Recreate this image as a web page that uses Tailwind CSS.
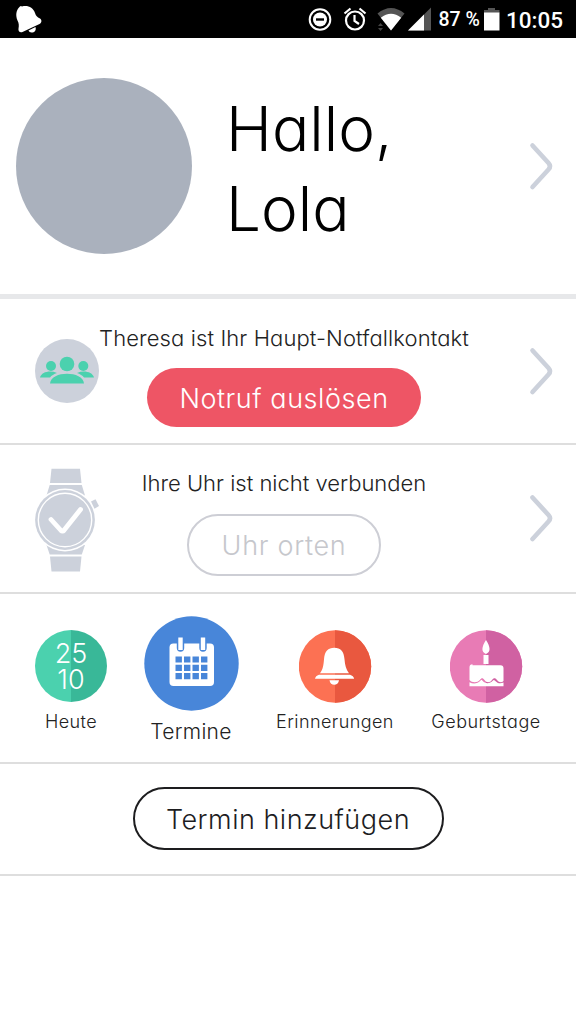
<!DOCTYPE html>
<html lang="de">
<head>
<meta charset="utf-8">
<title>Hallo, Lola</title>
<script src="https://cdn.jsdelivr.net/npm/@tailwindcss/browser@4"></script>
</head>
<body class="bg-white">
<div class="flex h-[1024px] w-[576px] flex-col overflow-hidden bg-white font-['Inter','Open_Sans',sans-serif] font-light text-[#222] [font-feature-settings:'cv11']">

  <!-- Status bar -->
  <header class="h-[38px] shrink-0 bg-black">
    <div class="flex h-full justify-between">
      <svg class="ml-3 h-[38px] w-8" viewBox="12 0 32 38" fill="#fff">
        <path d="M19 7.500q1.500-2.500 3-1c6-1.500 11 1 13 6.500 1 3 2 4 5 5.500 2 1.500 2 4-.500 5.500L22.500 32c-2.500 1-4.500-.500-4-3.500.500-3 .500-5-1-8-2-5-1.500-9.500 1.500-13Z"/>
        <path d="M28.500 30.500l7-3.500c1 3.500-1 5.500-4 5.500-1.500 0-2.500-.700-3-2Z"/>
      </svg>
      <div class="flex">
        <svg class="h-[38px] w-[134px]" viewBox="304 0 134 38">
          <circle cx="319" cy="19.500" r="10.300" fill="none" stroke="#fff" stroke-width="2"/>
          <circle cx="319" cy="19.500" r="7" fill="#fff"/>
          <path d="M315 19.500h8" stroke="#000" stroke-width="2.400"/>
          <g fill="none" stroke="#fff" stroke-width="2.200">
            <circle cx="354" cy="20.500" r="9"/>
            <path d="M353.500 15v6l4.500 3M343.500 13.500l6-5M358.500 8.500l6 5"/>
          </g>
          <path d="M376.500 13.500q13.500-11 27 0L390 30.500Z" fill="#555"/>
          <path d="M379.800 17.700q10.200-8 20.400 0L390 30.500Z" fill="#fff"/>
          <path d="M377 26l2.500-3 2.500 3ZM377 28l2.500 3 2.500-3Z" fill="#444"/>
          <path d="M407 30.500L430 7.500v23Z" fill="#555"/>
          <path d="M407 30.500L423 14.500v16Z" fill="#fff"/>
        </svg>
        <span class="mt-[8px] h-6 whitespace-nowrap font-[Roboto] text-[19.500px] font-medium leading-6 text-white">87 %</span>
        <svg class="ml-[3px] h-[38px] w-[18px]" viewBox="483 0 18 38"><path d="M484 10h4V8h7v2h4.500v3H484Z" fill="#555"/><path d="M484 12.500h15.500v18H484Z" fill="#fff"/></svg>
        <span class="ml-[5px] mr-[13px] mt-[7px] h-6 whitespace-nowrap font-[Roboto] text-[22.500px] font-medium leading-[26px] text-white">10:05</span>
      </div>
    </div>
  </header>

  <!-- Greeting -->
  <section class="flex h-[261px] shrink-0 items-start border-b-[5px] border-[#e7e8ea] pl-4">
    <div class="mt-10 size-[176px] rounded-full bg-[#aab1bd]"></div>
    <h1 class="ml-[34px] mt-[51px] w-[289px] text-[62px] leading-[80px] text-black">Hallo,<br>Lola</h1>
    <svg class="ml-[13px] mt-[103px] h-[50px] w-7" viewBox="0 0 28 50" fill="none" stroke="#ccd1db" stroke-width="4.600" stroke-linecap="round"><path d="M4.500 4.500L20.500 22q3 3.300 0 6.500L4.500 46"/></svg>
  </section>

  <!-- Emergency contact -->
  <section class="flex h-[146px] shrink-0 items-start border-b-2 border-[#dedede] pl-[35px]">
    <svg class="mt-10 size-16 shrink-0" viewBox="0 0 64 64">
      <circle cx="32" cy="32" r="32" fill="#ccd1db"/>
      <g fill="#4bd1ae">
        <circle cx="32" cy="25" r="7.300"/><circle cx="16" cy="27" r="5"/><circle cx="48.300" cy="27" r="5"/>
        <path d="M15 44.500c1-13 33-13 34 0Z"/>
        <path d="M5 38.500c1.500-5.500 10-7.500 17-4.500-3 1-5.500 2.500-7 4.500ZM59 38.500c-1.500-5.500-10-7.500-17-4.500 3 1 5.500 2.500 7 4.500Z"/>
      </g>
    </svg>
    <div class="flex w-[370px] flex-col items-center">
      <p class="mt-[24px] h-[30px] whitespace-nowrap text-[22px] leading-[30px] tracking-[0.11px]">Theresa ist Ihr Haupt-Notfallkontakt</p>
      <div class="mt-[15px] flex h-[59px] w-[274px] items-center justify-center rounded-full bg-[#ee5565] pt-[3px] text-[27px] tracking-[0.55px] text-white"><span class="whitespace-nowrap">Notruf auslösen</span></div>
    </div>
    <svg class="ml-[59px] mt-[47px] h-[50px] w-7" viewBox="0 0 28 50" fill="none" stroke="#ccd1db" stroke-width="4.600" stroke-linecap="round"><path d="M4.500 4.500L20.500 22q3 3.300 0 6.500L4.500 46"/></svg>
  </section>

  <!-- Watch -->
  <section class="flex h-[149px] shrink-0 items-start border-b-2 border-[#dedede] pl-[35px]">
    <svg class="mt-[23px] h-[104px] w-16 shrink-0" viewBox="35 468 64 104" fill="#ccd1db">
      <path d="M51.500 468.700H80L81.500 483H50ZM49.700 485H81.800L85 495.500H46.500ZM46.500 545H85L81.800 554.500H49.700ZM50 556.500H81.500L80 571.500H51.500Z"/>
      <circle cx="65" cy="520" r="31.500" fill="#fff"/>
      <circle cx="65" cy="520" r="29.900"/>
      <circle cx="65" cy="520" r="26.700" fill="none" stroke="#fff" stroke-width="1.400"/>
      <path d="M91 501.500l4.500-2.200 3.500 6.700-4.500 2.700Z"/>
      <path d="M51 519.500L61 530.500Q62.500 532 64 530.300L80.500 509.500" fill="none" stroke="#fff" stroke-width="4.800" stroke-linecap="round" stroke-linejoin="round"/>
    </svg>
    <div class="flex w-[370px] flex-col items-center">
      <p class="mt-[23px] h-[30px] whitespace-nowrap text-[22px] leading-[30px]">Ihre Uhr ist nicht verbunden</p>
      <div class="mt-[16px] flex h-[62px] w-[194px] items-center justify-center rounded-full border-2 border-[#cdced5] pt-[3px] text-[27px] tracking-[0.7px] text-[#c6c7cc]"><span class="whitespace-nowrap">Uhr orten</span></div>
    </div>
    <svg class="ml-[59px] mt-[48px] h-[50px] w-7" viewBox="0 0 28 50" fill="none" stroke="#ccd1db" stroke-width="4.600" stroke-linecap="round"><path d="M4.500 4.500L20.500 22q3 3.300 0 6.500L4.500 46"/></svg>
  </section>

  <!-- Shortcuts -->
  <nav class="flex h-[170px] shrink-0 items-start border-b-2 border-[#dedede] pl-[11px] text-[18px]">
    <a class="mt-9 flex w-[120px] flex-col items-center">
      <span class="flex size-[72px] flex-col items-center justify-center rounded-full bg-linear-to-r from-[#4bd1ae] from-50% to-[#39b898] to-50% pt-[2px] text-[27px] leading-[26px] text-white"><span>25</span><span>10</span></span>
      <span class="mt-[8px] leading-6 tracking-[0.4px]">Heute</span>
    </a>
    <a class="mt-[22px] flex w-[120px] flex-col items-center text-[21px]">
      <svg class="size-[95px]" viewBox="143.500 615.500 95 95">
        <circle cx="191" cy="663" r="47.200" fill="#4886d9"/>
        <rect x="169" y="643" width="44.500" height="42.500" rx="4" fill="#fff"/>
        <path d="M180 640v7.500M202.500 640v7.500" stroke="#4886d9" stroke-width="7.400" stroke-linecap="round"/>
        <path d="M180 637v12.500M202.500 637v12.500" stroke="#fff" stroke-width="4.400"/>
        <path d="M175 659h32M175 667.300h32M175 675.700h32" stroke="#4886d9" stroke-width="6.200" stroke-dasharray="6.400 2.100"/>
      </svg>
      <span class="mt-[7px] leading-7 tracking-[0.3px]">Termine</span>
    </a>
    <a class="ml-6 mt-9 flex w-[120px] flex-col items-center">
      <svg class="size-[73px]" viewBox="299 630 73 73">
        <circle cx="335" cy="666.500" r="36.200" fill="#fc7153"/>
        <path d="M335 630.300a36.200 36.200 0 0 1 0 72.400Z" fill="#e9583f"/>
        <path fill="#fff" d="M320 673.300c3-4 3.500-8 4-14 .700-8 4-11.500 10.300-11.500s9.600 3.500 10.200 11.500c.500 6 1.500 10 4.500 14ZM319 674.700h31q3.500 1 4.200 4H315q.500-3 4-4ZM329.500 680.300h9.500c-.700 6-8.800 6-9.500 0Z"/>
      </svg>
      <span class="mt-[7px] leading-6 tracking-[0.42px]">Erinnerungen</span>
    </a>
    <a class="ml-[31px] mt-9 flex w-[120px] flex-col items-center">
      <svg class="size-[73px]" viewBox="449.500 630 73 73">
        <circle cx="485.500" cy="666.500" r="36.200" fill="#e87bb5"/>
        <path d="M485.500 630.300a36.200 36.200 0 0 1 0 72.400Z" fill="#d061a2"/>
        <path fill="#fff" d="M485.500 640c-4.500 7-5 12 0 14 5-2 4.500-7 0-14ZM483 655h5v9h-5ZM472 665.300h28q3 0 3 3V681c-2 2-4.500 1.500-6.500-1-1.700-2.500-3.300-2.500-5 0-2 3-5.500 3-7.500 0-1.700-2.500-3-2.500-4.700 0-2.500 3-7.800 3-10.300 0v-12.700q0-3 3-3ZM469 682.300c4 2 8 1.500 11.300-2 .700-1 1-.500 1.500.200 3.200 3.500 7.200 3.500 10.700 0 .700-1 1.300-.500 2 .200 2.500 2.500 5 3.300 8.500 1.800v3.800h-34Z"/>
      </svg>
      <span class="mt-[7px] leading-6 tracking-[0.5px]">Geburtstage</span>
    </a>
  </nav>

  <!-- Add appointment -->
  <section class="flex h-[112px] shrink-0 justify-center border-b-2 border-[#dedede]">
    <button class="mt-[23px] h-[63px] w-[311px] whitespace-nowrap rounded-full border-2 border-[#1d1d1f] pt-[3px] text-[27px] tracking-[0.5px] text-[#1d1d1f]">Termin hinzufügen</button>
  </section>
</div>
</body>
</html>
